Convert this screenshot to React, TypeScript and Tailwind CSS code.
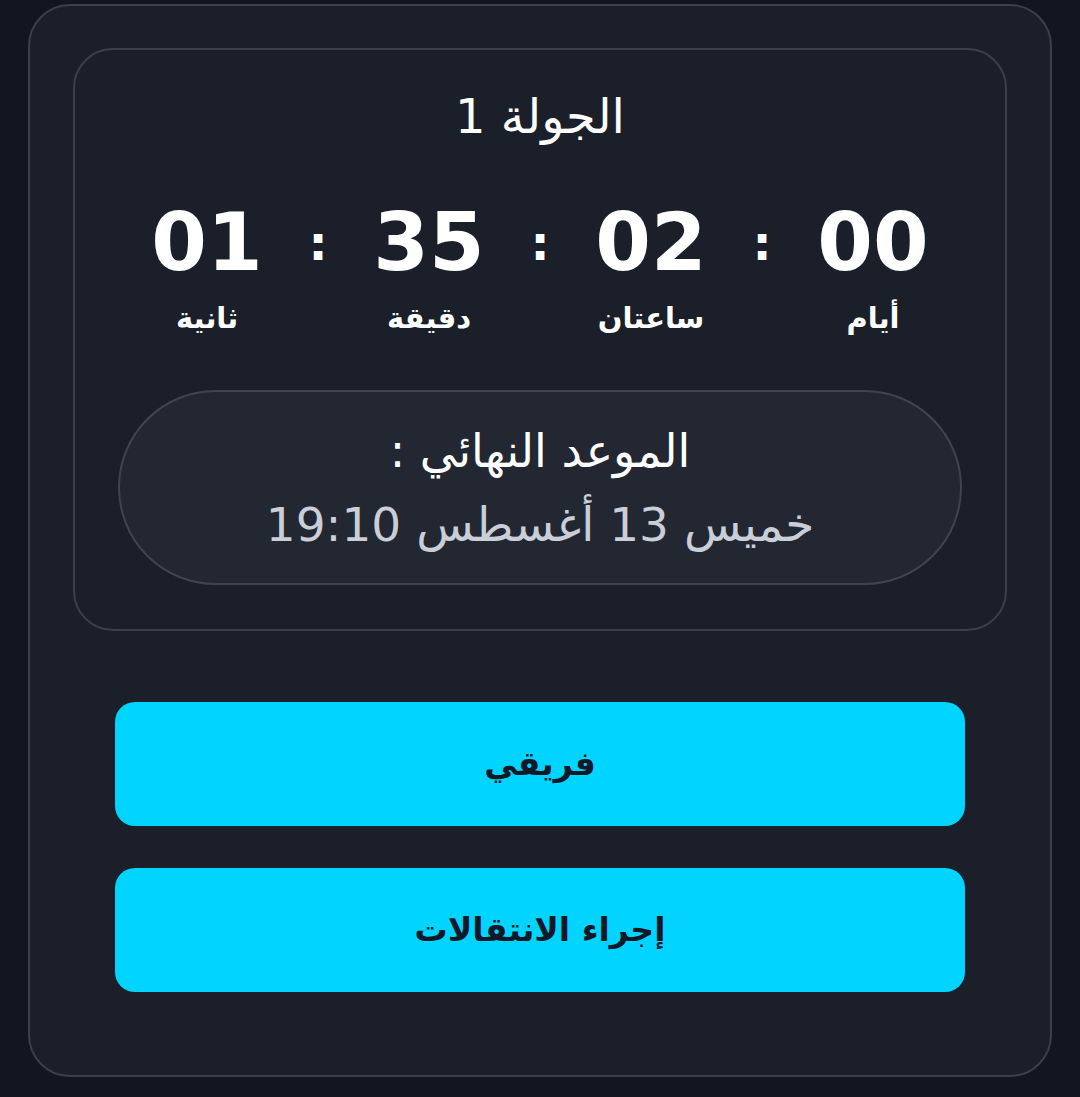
const UNITS = [
  { value: '00', label: 'أيام' },
  { value: '02', label: 'ساعتان' },
  { value: '35', label: 'دقيقة' },
  { value: '01', label: 'ثانية' },
]

export default function App() {
  return (
    <div dir="rtl" className="min-h-screen bg-[#111620] pt-[4px] px-[28px] pb-[20px]"
      style={{ fontFamily: '"DejaVu Sans", "Noto Sans", sans-serif' }}>
      <div className="h-[1073px] rounded-[42px] border-2 border-[#3a404b] bg-[#1b1f2a] px-[43px] pt-[42px]">
        {/* round card */}
        <div className="h-[583px] rounded-[40px] border-2 border-[#3a404b] px-[43px] pt-[36px] flex flex-col items-center">
          <h1 className="text-[48px] leading-[60px] text-white">الجولة 1</h1>

          <div className="mt-[56px] flex items-start justify-center">
            {UNITS.map((u, i) => (
              <div key={u.label} className="flex items-start">
                {i > 0 && (
                  <div className="w-[72px] text-center text-[48px] font-bold leading-[82px] text-white">:</div>
                )}
                <div className="w-[150px] flex flex-col items-center">
                  <div dir="ltr" className="text-[80px] font-bold leading-[82px] text-white">{u.value}</div>
                  <div className="mt-[16px] text-[29px] font-bold leading-[36px] text-white">{u.label}</div>
                </div>
              </div>
            ))}
          </div>

          <div className="mt-[54px] w-full h-[195px] rounded-full border-2 border-[#3e4450] bg-[#222732] flex flex-col items-center justify-center">
            <div className="text-[46px] leading-[60px] text-white">الموعد النهائي :</div>
            <div className="mt-[14px] text-[47px] leading-[60px] text-[#c9ced8]">خميس 13 أغسطس 19:10</div>
          </div>
        </div>

        {/* actions */}
        <div className="mt-[71px] px-[42px] flex flex-col gap-[42px]">
          <button className="h-[124px] w-full rounded-[20px] bg-[#00d4ff] text-[33px] font-bold text-[#111827]">فريقي</button>
          <button className="h-[124px] w-full rounded-[20px] bg-[#00d4ff] text-[33px] font-bold text-[#111827]">إجراء الانتقالات</button>
        </div>
      </div>
    </div>
  )
}
